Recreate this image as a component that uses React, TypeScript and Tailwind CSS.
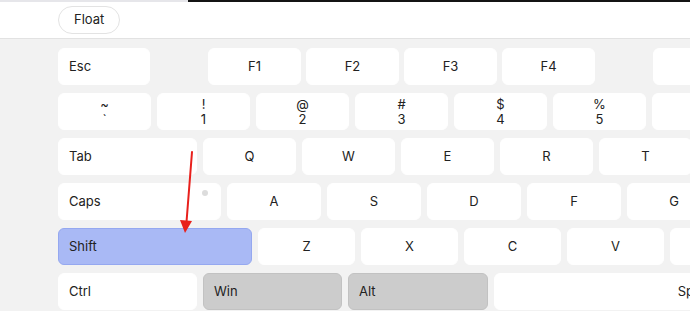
import React from 'react';

type KeyDef = {
  label?: string;
  top?: string;
  width: number;
  align?: 'left' | 'center';
  tone?: 'plain' | 'active' | 'held';
  ml?: number;
  dot?: boolean;
};

const rows: { gap: number; keys: KeyDef[] }[] = [
  {
    gap: 5,
    keys: [
      { label: 'Esc', width: 92, align: 'left' },
      { label: 'F1', width: 93, ml: 53 },
      { label: 'F2', width: 93 },
      { label: 'F3', width: 93 },
      { label: 'F4', width: 93 },
      { width: 93, ml: 53 },
    ],
  },
  {
    gap: 6,
    keys: [
      { top: '~', label: '`', width: 93 },
      { top: '!', label: '1', width: 93 },
      { top: '@', label: '2', width: 93 },
      { top: '#', label: '3', width: 93 },
      { top: '$', label: '4', width: 93 },
      { top: '%', label: '5', width: 93 },
      { width: 93 },
    ],
  },
  {
    gap: 6,
    keys: [
      { label: 'Tab', width: 139, align: 'left' },
      { label: 'Q', width: 93 },
      { label: 'W', width: 93 },
      { label: 'E', width: 93 },
      { label: 'R', width: 93 },
      { label: 'T', width: 93 },
    ],
  },
  {
    gap: 6,
    keys: [
      { label: 'Caps', width: 163, align: 'left', dot: true },
      { label: 'A', width: 94 },
      { label: 'S', width: 94 },
      { label: 'D', width: 94 },
      { label: 'F', width: 94 },
      { label: 'G', width: 94 },
    ],
  },
  {
    gap: 6,
    keys: [
      { label: 'Shift', width: 194, align: 'left', tone: 'active' },
      { label: 'Z', width: 97 },
      { label: 'X', width: 97 },
      { label: 'C', width: 97 },
      { label: 'V', width: 97 },
      { width: 97 },
    ],
  },
  {
    gap: 6,
    keys: [
      { label: 'Ctrl', width: 139, align: 'left' },
      { label: 'Win', width: 139, align: 'left', tone: 'held' },
      { label: 'Alt', width: 140, align: 'left', tone: 'held' },
      { label: 'Space', width: 406 },
    ],
  },
];

function Key({ k }: { k: KeyDef }) {
  const toneCls =
    k.tone === 'active'
      ? 'bg-[#a9b9f5] border-[#95a8f0]'
      : k.tone === 'held'
        ? 'bg-[#cccccc] border-[#c2c2c2]'
        : 'bg-white border-white';

  return (
    <div
      className={`relative shrink-0 h-[37px] rounded-[6px] border flex flex-col justify-center text-[13px] text-[#222] leading-[15px] ${toneCls} ${
        k.align === 'left' ? 'items-start pl-[10px]' : 'items-center'
      }`}
      style={{ width: k.width, marginLeft: k.ml }}
    >
      {k.top && <span>{k.top}</span>}
      {k.label && <span>{k.label}</span>}
      {k.dot && (
        <span className="absolute right-[12px] top-[6px] w-[6px] h-[6px] rounded-full bg-[#dcdcdc]" />
      )}
    </div>
  );
}

export default function App() {
  return (
    <div
      className="relative w-[690px] h-[311px] overflow-hidden bg-[#f2f2f2]"
      style={{ fontFamily: 'Inter, "Noto Sans", sans-serif' }}
    >
      {/* top strip */}
      <div className="flex h-[2px]">
        <div className="w-[188px] bg-[#e6e6ea]" />
        <div className="flex-1 bg-[#141414]" />
      </div>

      {/* toolbar */}
      <div className="h-[37px] bg-white border-b border-[#e2e2e2] flex items-center pl-[58px]">
        <button className="h-[28px] px-[15px] rounded-full border border-[#e3e3e3] bg-white text-[13px] text-[#222]">
          Float
        </button>
      </div>

      {/* keyboard */}
      <div className="flex flex-col gap-[8px] pl-[58px] pt-[9px]">
        {rows.map((row, i) => (
          <div key={i} className="flex" style={{ gap: row.gap }}>
            {row.keys.map((k, j) => (
              <Key key={j} k={k} />
            ))}
          </div>
        ))}
      </div>

      {/* annotation arrow */}
      <svg
        className="absolute left-0 top-0 pointer-events-none"
        width="690"
        height="311"
        viewBox="0 0 690 311"
      >
        <line x1="192" y1="152" x2="186.5" y2="222" stroke="#e8201c" strokeWidth="2" strokeLinecap="round" />
        <polygon points="180,220 192,221 185,233" fill="#e8201c" />
      </svg>
    </div>
  );
}
